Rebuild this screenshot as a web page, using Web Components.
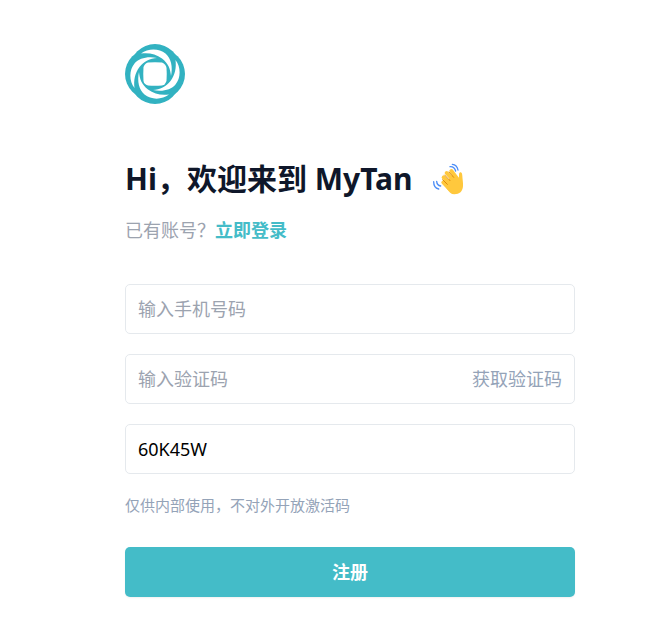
<!DOCTYPE html>
<html lang="zh-CN">
<head>
<meta charset="utf-8">
<meta name="viewport" content="width=device-width, initial-scale=1">
<title>MyTan</title>
<style>
body { margin: 0; background: #fff; color: #0f172a; font-family: "Noto Sans", "Noto Sans CJK SC", sans-serif; }
</style>
</head>
<body>
<signup-page></signup-page>
<script>
const define = (name, html, setup) => customElements.define(name, class extends HTMLElement {
  connectedCallback() {
    if (this.shadowRoot) return;
    const t = document.createElement('template');
    t.innerHTML = html;
    this.attachShadow({ mode: 'open' }).append(t.content.cloneNode(true));
    if (setup) setup(this, this.shadowRoot);
  }
});

define('brand-logo', `
<style>:host{display:block;width:60px;height:60px} svg{display:block}</style>
<svg width="60" height="60" viewBox="0 0 60 60" role="img" aria-label="MyTan">
  <defs><path id="c" d="M16 9.500C23 4 34 4 40.500 9.500C46 14 48 23 46 32C45.500 25 43 19 37 14.500C31 10 24 8.500 16 9.500Z"/></defs>
  <g fill="#32b2c1"><circle cx="30" cy="25" r="25"/><circle cx="35" cy="30" r="25"/><circle cx="30" cy="35" r="25"/><circle cx="25" cy="30" r="25"/></g>
  <g fill="#fff"><use href="#c"/><use href="#c" transform="rotate(90 30 30)"/><use href="#c" transform="rotate(180 30 30)"/><use href="#c" transform="rotate(270 30 30)"/>
  <path d="M23 18.500Q30 18 37 18.500Q41 20 41.500 24Q42 30 41.500 37Q40 41 37 41.500Q30 42 23 41.500Q19 40 18.500 37Q18 30 18.500 23Q20 19 23 18.500Z"/></g>
</svg>`);

define('waving-hand', `
<style>:host{display:block;flex:none} svg{display:block}</style>
<svg width="34" height="32" viewBox="20 12 102 96" role="img" aria-label="挥手">
  <g fill="none" stroke="#ffc83d" stroke-width="12" stroke-linecap="round">
    <path d="M54 70L71 88M55 55L80 80M64 42L88 68M78 36L96 60"/>
  </g>
  <path fill="#ffc83d" d="M58 76L84 45L97 59Q101 61 101 52L101 45Q102 38 107 40Q111 42 111 50C111 59 114 70 113 82C112 97 103 106 87 106C77 106 71 99 65 90Z"/>
  <g fill="none" stroke="#d67d00" stroke-width="2.500" stroke-linecap="round"><path d="M52 62L66 76M58 48L74 65M71 39L85 55"/></g>
  <g fill="none" stroke="#4c8df6" stroke-width="4" stroke-linecap="round">
    <path d="M74 23Q87 22 91 36M81 16Q95 17 98 33M34 67Q35 79 46 81M25 68Q25 86 40 90"/>
  </g>
</svg>`);

define('text-field', `
<style>
:host{display:block}
.box{display:flex;align-items:center;box-sizing:border-box;height:50px;padding:0 12px;border:1px solid #e5e9ed;border-radius:5px;background:#fff}
.box:focus-within{border-color:#44bcc8}
input{flex:1;min-width:0;height:48px;padding:0;border:0;outline:0;background:none;color:#000;font:inherit;font-size:18px}
input::placeholder{color:#9ca3af;opacity:1}
</style>
<div class="box"><input><slot></slot></div>`, (host, root) => {
  const input = root.querySelector('input');
  input.type = host.getAttribute('type') || 'text';
  input.placeholder = host.getAttribute('placeholder') || '';
  input.setAttribute('aria-label', host.getAttribute('label'));
  input.value = host.getAttribute('value') || '';
});

define('primary-button', `
<style>
:host{display:block}
button{display:block;width:100%;height:50px;padding:0 0 2px;border:0;border-radius:5px;background:#44bcc8;color:#fff;font:inherit;font-size:18px;font-weight:700;box-shadow:0 1px 2px rgba(0,0,0,.06);cursor:pointer}
</style>
<button type="button"><slot></slot></button>`);

define('signup-page', `
<style>
:host{display:block;padding:44px 76px 42px 125px}
h1{display:flex;align-items:center;gap:19px;margin:52px 0 0;font-size:30px;line-height:45px;font-weight:700;white-space:nowrap}
p{margin:0;color:#94a3b8}
.login{margin-top:16px;font-size:18px;line-height:27px;color:#9ca3af}
a{color:#44bcc8;font-weight:700;text-decoration:none}
form{display:grid;gap:20px;margin-top:40px}
.code{padding:0 0 2px;border:0;background:none;color:#94a3b8;font:inherit;font-size:18px;cursor:pointer}
.hint{font-size:15px;line-height:23px}
primary-button{margin-top:10px}
</style>
<brand-logo></brand-logo>
<h1><span>Hi，欢迎来到 MyTan</span><waving-hand></waving-hand></h1>
<p class="login">已有账号？<a href="#login">立即登录</a></p>
<form>
  <text-field type="tel" label="手机号码" placeholder="输入手机号码"></text-field>
  <text-field label="验证码" placeholder="输入验证码"><button class="code" type="button">获取验证码</button></text-field>
  <text-field label="激活码" value="60K45W"></text-field>
  <p class="hint">仅供内部使用，不对外开放激活码</p>
  <primary-button>注册</primary-button>
</form>`);
</script>
</body>
</html>
